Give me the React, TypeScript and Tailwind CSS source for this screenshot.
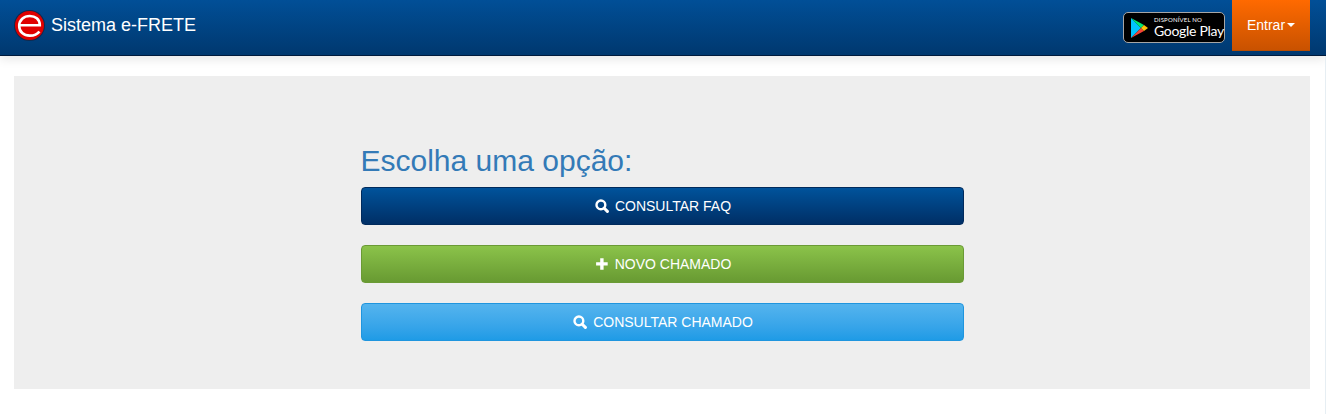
function SearchIcon() {
  return (
    <svg className="h-[14px] w-[14px]" viewBox="0 0 14 14" fill="none" stroke="currentColor">
      <circle cx="5.9" cy="5.9" r="4.4" strokeWidth="2.4" />
      <path d="M9 9 12.4 12.4" strokeWidth="3" strokeLinecap="round" />
    </svg>
  );
}

function PlusIcon() {
  return (
    <svg className="h-[14px] w-[14px]" viewBox="0 0 14 14" fill="currentColor">
      <path d="M5.2 1.2h3.4v4.1h4.1v3.300H8.6v4.100H5.2V8.600H1.100V5.300h4.100z" />
    </svg>
  );
}

function Logo() {
  return (
    <svg className="h-[31px] w-[31px] shrink-0" viewBox="0 0 31 31">
      <circle cx="15.5" cy="15.5" r="15.5" fill="#12294d" />
      <circle cx="15.5" cy="15.5" r="14.5" fill="#e00000" />
      <path
        d="M5.600 15.200h20.200c0-6-4.600-9.200-10-9.200-6 0-10.600 3.900-10.600 9.900 0 6.100 4.600 9.700 10.600 9.700 4.200 0 7.700-1.500 9.600-4.200"
        fill="none"
        stroke="#fff"
        strokeWidth="2.6"
      />
    </svg>
  );
}

function GooglePlayBadge() {
  return (
    <div className="flex h-[31px] w-[102px] items-center rounded-[5px] border border-[#a6a6a6] bg-black pl-[7px]">
      <svg className="h-[20px] w-[17px] shrink-0" viewBox="0 0 17 20">
        <path d="M0 0v20l10-10z" fill="#00c3ff" />
        <path d="M0 0l10 10 3-3z" fill="#00e676" />
        <path d="M0 20l10-10 3 3z" fill="#f44336" />
        <path d="M13 7l4 3-4 3-3-3z" fill="#ffc107" />
      </svg>
      <div className="ml-[6px] flex flex-col whitespace-nowrap font-['Lato',sans-serif] text-white">
        <span className="text-[6px] leading-[7px] tracking-[0.2px]">DISPONÍVEL NO</span>
        <span className="text-[14px] leading-[16px] tracking-[-0.3px]">Google Play</span>
      </div>
    </div>
  );
}

function OptionButton({
  children,
  className,
  icon,
}: {
  children: React.ReactNode;
  className: string;
  icon: React.ReactNode;
}) {
  return (
    <button
      className={`flex h-[38px] w-full items-center justify-center gap-[6px] rounded border pl-[2px] text-sm text-white ${className}`}
    >
      {icon}
      {children}
    </button>
  );
}

export default function App() {
  return (
    <div className="min-h-[414px] bg-white font-['Liberation_Sans',Arial,sans-serif] text-[#333]">
      <header className="flex h-[56px] items-start justify-between border-b border-[#001b3d] bg-gradient-to-b from-[#014f97] to-[#00386f] pl-[14px] pr-[16px] shadow-[0_3px_10px_rgba(0,0,0,0.1)]">
        <div className="flex h-[51px] items-center gap-[6px]">
          <Logo />
          <span className="text-[18px] text-white">Sistema e-FRETE</span>
        </div>
        <div className="flex items-start gap-[7px]">
          <div className="pt-[12px]">
            <GooglePlayBadge />
          </div>
          <button className="flex h-[51px] w-[78px] items-center justify-center border-b border-[#b84c00] bg-gradient-to-b from-[#ff6a00] to-[#c95200] text-sm text-white">
            Entrar
            <span className="ml-[2px] h-0 w-0 border-x-[4px] border-t-[4px] border-x-transparent border-t-white" />
          </button>
        </div>
      </header>
      <main className="h-[358px] border-r border-[#e6eef3] pl-[14px] pr-[15px] pt-[20px]">
        <section className="h-[313px] bg-[#eeeeee] pt-[68px]">
          <div className="mx-auto w-[603px]">
            <h2 className="mb-[10px] text-[30px] leading-[33px] text-[#337ab7]">Escolha uma opção:</h2>
            <div className="flex flex-col gap-[20px]">
              <OptionButton
                className="border-[#002a5c] bg-gradient-to-b from-[#00539b] to-[#002f66]"
                icon={<SearchIcon />}
              >
                CONSULTAR FAQ
              </OptionButton>
              <OptionButton
                className="border-[#6a9a35] bg-gradient-to-b from-[#8bc34a] to-[#689a32]"
                icon={<PlusIcon />}
              >
                NOVO CHAMADO
              </OptionButton>
              <OptionButton
                className="border-[#1f95de] bg-gradient-to-b from-[#54b4ee] to-[#1e9be6]"
                icon={<SearchIcon />}
              >
                CONSULTAR CHAMADO
              </OptionButton>
            </div>
          </div>
        </section>
      </main>
    </div>
  );
}
